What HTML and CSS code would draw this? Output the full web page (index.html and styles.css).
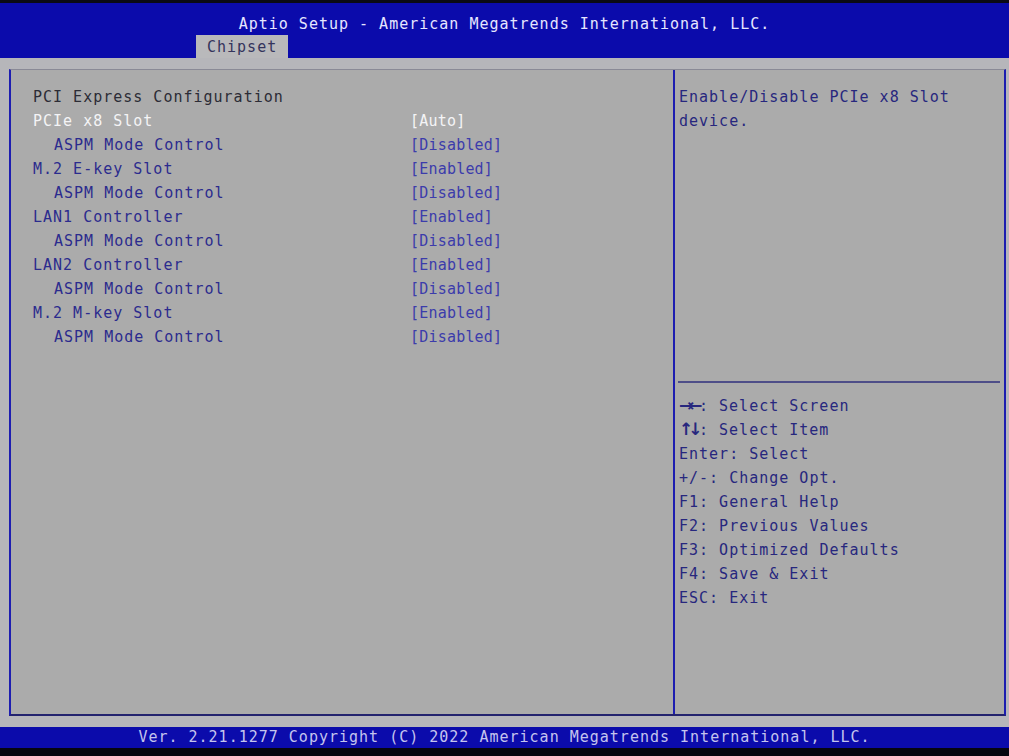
FILE: index.html
```html
<!DOCTYPE html>
<html lang="en">

<head>
    <meta charset="UTF-8">
    <meta name="viewport" content="width=device-width, initial-scale=1.0">
    <title>Aptio Setup - Chipset</title>
    <link rel="stylesheet" href="styles.css">
</head>

<body>
    <header class="topbar">
        <div class="title">Aptio Setup - American Megatrends International, LLC.</div>
        <nav class="tabs">
            <span class="tab active">Chipset</span>
        </nav>
    </header>

    <main class="body">
        <div class="frame">
            <section class="items">
                <div class="heading">PCI Express Configuration</div>
                <div class="row selected"><span class="label">PCIe x8 Slot</span><span class="value">[Auto]</span></div>
                <div class="row sub"><span class="label">ASPM Mode Control</span><span class="value">[Disabled]</span></div>
                <div class="row"><span class="label">M.2 E-key Slot</span><span class="value">[Enabled]</span></div>
                <div class="row sub"><span class="label">ASPM Mode Control</span><span class="value">[Disabled]</span></div>
                <div class="row"><span class="label">LAN1 Controller</span><span class="value">[Enabled]</span></div>
                <div class="row sub"><span class="label">ASPM Mode Control</span><span class="value">[Disabled]</span></div>
                <div class="row"><span class="label">LAN2 Controller</span><span class="value">[Enabled]</span></div>
                <div class="row sub"><span class="label">ASPM Mode Control</span><span class="value">[Disabled]</span></div>
                <div class="row"><span class="label">M.2 M-key Slot</span><span class="value">[Enabled]</span></div>
                <div class="row sub"><span class="label">ASPM Mode Control</span><span class="value">[Disabled]</span></div>
            </section>

            <aside class="side">
                <div class="help">Enable/Disable PCIe x8 Slot<br>device.</div>
                <hr class="divider">
                <ul class="keys">
                    <li><b class="arrows">→←</b>: Select Screen</li>
                    <li><b class="arrows">↑↓</b>: Select Item</li>
                    <li>Enter: Select</li>
                    <li>+/-: Change Opt.</li>
                    <li>F1: General Help</li>
                    <li>F2: Previous Values</li>
                    <li>F3: Optimized Defaults</li>
                    <li>F4: Save &amp; Exit</li>
                    <li>ESC: Exit</li>
                </ul>
            </aside>
        </div>
    </main>

    <footer class="status">Ver. 2.21.1277 Copyright (C) 2022 American Megatrends International, LLC.</footer>
</body>

</html>
```

FILE: styles.css
```css
* {
    box-sizing: border-box;
}

body {
    margin: 0;
    width: 1009px;
    height: 756px;
    overflow: hidden;
    background-color: #b6b6ba;
    font-family: "DejaVu Sans Mono", "Liberation Mono", monospace;
    font-size: 15px;
    letter-spacing: 1px;
}

.topbar {
    height: 58px;
    border-top: 3px solid #0a0a14;
    background-color: #0b0bab;
}

.title {
    padding-top: 10px;
    line-height: 22px;
    text-align: center;
    color: #e6e6ff;
}

.tabs {
    display: flex;
    padding-left: 196px;
}

.tab {
    height: 23px;
    line-height: 24px;
    padding: 0 11px;
    background-color: #b9b9bb;
    color: #34345c;
}

.body {
    padding: 11px 3px 11px 9px;
}

.frame {
    display: grid;
    grid-template-columns: 662px 1fr;
    height: 647px;
    border-top: 1px solid #8a8a96;
    border-left: 2px solid #1d1db0;
    border-right: 2px solid #1d1db0;
    border-bottom: 2px solid #23236e;
    background-color: #ababab;
}

.items {
    padding: 15px 0 0 22px;
    line-height: 24px;
}

.heading {
    color: #2c2c36;
}

.row {
    display: grid;
    grid-template-columns: 377px 1fr;
    color: #2b2b8e;
}

.row .value {
    color: #3c3cab;
    letter-spacing: 0.2px;
}

.row.sub .label {
    padding-left: 21px;
}

.row.selected .label,
.row.selected .value {
    color: #f4f4f6;
}

.side {
    display: flex;
    flex-direction: column;
    border-left: 2px solid #1d1db0;
    line-height: 24px;
    color: #27277e;
}

.help {
    height: 311px;
    padding: 15px 0 0 4px;
}

.divider {
    margin: 0 4px 0 3px;
    border: none;
    height: 2px;
    background-color: #4e4e88;
}

.keys {
    list-style: none;
    margin: 0;
    padding: 11px 0 0 4px;
}

.arrows {
    display: inline-block;
    width: 20px;
    font-family: "DejaVu Sans", sans-serif;
    font-size: 17px;
    font-weight: bold;
    letter-spacing: -5px;
    line-height: 1;
}

.status {
    height: 29px;
    line-height: 21px;
    border-bottom: 8px solid #06060e;
    background-color: #0b0bab;
    color: #c4c4ee;
    text-align: center;
}
```
